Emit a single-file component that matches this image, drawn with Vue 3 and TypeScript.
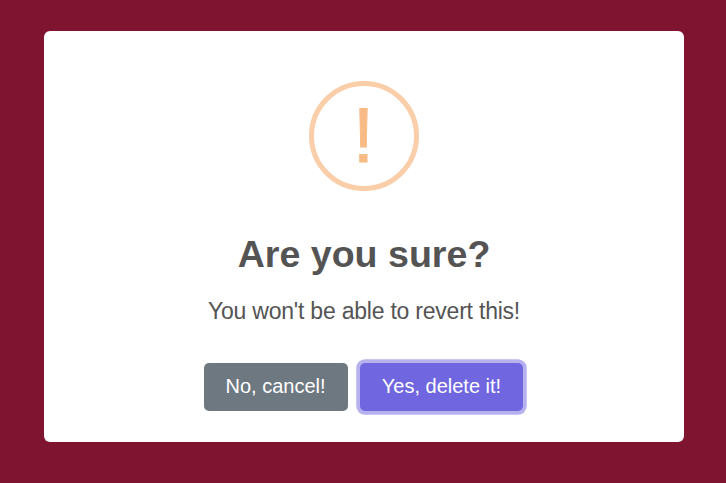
<script setup lang="ts">
const title: string = 'Are you sure?'
const message: string = "You won't be able to revert this!"
</script>

<template>
  <main class="backdrop">
    <section class="popup" role="dialog">
      <div class="icon"><span class="mark">!</span></div>
      <h2 class="title">{{ title }}</h2>
      <p class="message">{{ message }}</p>
      <div class="actions">
        <button class="btn cancel" type="button">No, cancel!</button>
        <button class="btn confirm" type="button">Yes, delete it!</button>
      </div>
    </section>
  </main>
</template>

<style>
body { margin: 0; }
</style>

<style scoped>
.backdrop {
  box-sizing: border-box;
  height: 483px;
  padding: 31px 42px 41px 44px;
  background: #7f1431;
  font-family: "Liberation Sans", Arial, sans-serif;
}
.popup {
  box-sizing: border-box;
  height: 411px;
  padding-top: 50px;
  display: flex;
  flex-direction: column;
  align-items: center;
  background: #fff;
  border-radius: 6px;
}
.icon {
  box-sizing: border-box;
  width: 110px;
  height: 110px;
  border: 5px solid #facea8;
  border-radius: 50%;
  display: flex;
  align-items: flex-start;
  justify-content: center;
  padding-right: 1px;
  color: #f8bb86;
}
.mark { font-size: 77px; line-height: 99px; -webkit-text-stroke: 0.9px #f8bb86; }
.title {
  margin: 41px 0 0;
  font-size: 37.6px;
  line-height: 44px;
  font-weight: 700;
  color: #545454;
  white-space: nowrap;
}
.message {
  margin: 22px 0 0;
  font-size: 23px;
  line-height: 26px;
  letter-spacing: -0.22px;
  color: #545454;
  white-space: nowrap;
}
.actions { display: flex; gap: 12px; margin-top: 39px; padding-right: 1px; }
.btn {
  box-sizing: border-box;
  height: 48px;
  padding: 0 0 2px;
  border: 0;
  border-radius: 5px;
  color: #fff;
  font: 20px "Liberation Sans", Arial, sans-serif;
  white-space: nowrap;
}
.cancel { width: 144px; padding-right: 1px; background: #6e7881; }
.confirm { width: 163px; background: #7066e0; box-shadow: 0 0 0 3.75px #b7b2ef; }
</style>
